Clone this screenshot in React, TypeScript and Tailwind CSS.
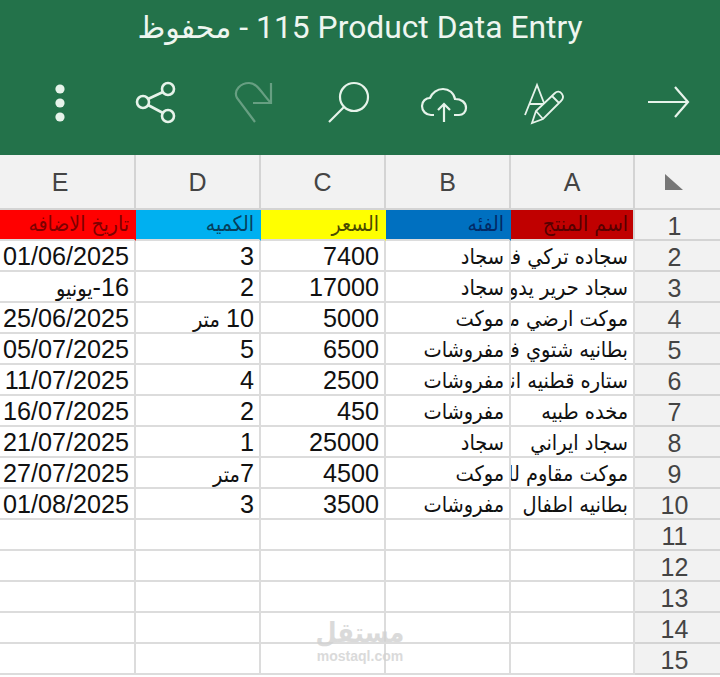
const columns = ['E', 'D', 'C', 'B', 'A'];
const widths = ['w-[136px]', 'w-[125px]', 'w-[125px]', 'w-[125px]', 'w-[124px]'];

const headers = [
  { text: 'تاريخ الاضافه', cls: 'bg-[#ff0000] text-[#7d0000]' },
  { text: 'الكميه', cls: 'bg-[#00b0f0] text-[#06405c]' },
  { text: 'السعر', cls: 'bg-[#ffff00] text-[#4a4a00]' },
  { text: 'الفئه', cls: 'bg-[#0070c0] text-[#022a66]' },
  { text: 'اسم المنتج', cls: 'bg-[#c00000] text-[#560000]' },
];

const rows = [
  ['01/06/2025', '3', '7400', 'سجاد', 'سجاده تركي فاخر'],
  ['16-يونيو', '2', '17000', 'سجاد', 'سجاد حرير يدوي'],
  ['25/06/2025', '10 متر', '5000', 'موكت', 'موكت ارضي مقاوم'],
  ['05/07/2025', '5', '6500', 'مفروشات', 'بطانيه شتوي فاخره'],
  ['11/07/2025', '4', '2500', 'مفروشات', 'ستاره قطنيه انيقه'],
  ['16/07/2025', '2', '450', 'مفروشات', 'مخده طبيه'],
  ['21/07/2025', '1', '25000', 'سجاد', 'سجاد ايراني'],
  ['27/07/2025', '7متر', '4500', 'موكت', 'موكت مقاوم للماء'],
  ['01/08/2025', '3', '3500', 'مفروشات', 'بطانيه اطفال'],
  ['', '', '', '', ''],
  ['', '', '', '', ''],
  ['', '', '', '', ''],
  ['', '', '', '', ''],
  ['', '', '', '', ''],
];

// digits keep the Arial-width face, Arabic runs get the narrower one
function CellText({ value }: { value: string }) {
  const parts = value.split(/(\d[\d/-]*)/).filter(Boolean);
  return (
    <>
      {parts.map((part, i) =>
        /^\d/.test(part) ? (
          <span key={i} className="text-[25.2px]">{part}</span>
        ) : (
          <span key={i} className="text-[21.5px] font-['DejaVu_Sans_Condensed','DejaVu_Sans',sans-serif]">{part}</span>
        ),
      )}
    </>
  );
}

function ToolIcon({ children, dim }: { children: React.ReactNode; dim?: boolean }) {
  return (
    <svg
      width="60"
      height="70"
      viewBox="0 0 60 70"
      fill="none"
      stroke="#e6f3ea"
      strokeWidth="2.2"
      className={dim ? 'opacity-35' : ''}
    >
      {children}
    </svg>
  );
}

function Toolbar() {
  return (
    <div className="flex h-[70px] pl-[30px] pr-[22px] gap-[36.6px]">
      <ToolIcon>
        <circle cx="30" cy="19" r="4.6" fill="#e6f3ea" stroke="none" />
        <circle cx="30" cy="33" r="4.6" fill="#e6f3ea" stroke="none" />
        <circle cx="30" cy="47" r="4.6" fill="#e6f3ea" stroke="none" />
      </ToolIcon>
      <ToolIcon>
        <circle cx="41" cy="19" r="6" strokeWidth="2.6" />
        <circle cx="16" cy="32" r="6" strokeWidth="2.6" />
        <circle cx="41" cy="46" r="6" strokeWidth="2.6" />
        <path d="M21 29 L36 22 M21 35 L36 43" strokeWidth="2.6" />
      </ToolIcon>
      <ToolIcon dim>
        <path d="M32 52 L14 28 C10 20 18 13 26 13 C34 13 38 22 47 32" />
        <path d="M48 13 V33 H30" />
      </ToolIcon>
      <ToolIcon>
        <circle cx="34" cy="27" r="14" />
        <path d="M24 37 L9 52" />
      </ToolIcon>
      <ToolIcon>
        <path d="M18 45 H15 C10 45 6 41 6 36 C6 31 10 28 14 28 C16 23 21 19 27 19 C33 19 38 23 39 29 C45 29 50 32 50 38 C50 42 47 45 43 45 H38" />
        <path d="M28 52 V34 M22 40 L28 34 L34 40" />
      </ToolIcon>
      <ToolIcon>
        <path d="M12 45 L24 15 L31 33 M17 34 H30" strokeWidth="1.8" />
        <path d="M19 53 L23 41 L42 23 C44 21 47 21 49 24 C51 27 50 29 48 31 L30 49 Z M23 41 L30 49 M39 26 L46 33" strokeWidth="1.8" />
      </ToolIcon>
      <div className="ml-auto">
        <ToolIcon>
          <path d="M10 32 H50 M37 17 L50 32 L37 47" />
        </ToolIcon>
      </div>
    </div>
  );
}

export default function App() {
  return (
    <div className="relative w-[720px] h-[677px] overflow-hidden bg-white font-['Liberation_Sans','DejaVu_Sans',sans-serif]">
      {/* Green title bar */}
      <div className="h-[155px] bg-[#23724a] flex flex-col">
        <div className="h-[70px] pb-[14px] flex items-center justify-center gap-[8px] text-[#eef6f0] font-['Roboto','DejaVu_Sans',sans-serif] whitespace-nowrap">
          <span className="text-[30px] leading-[40px] font-['DejaVu_Sans','Roboto',sans-serif]">محفوظ</span>
          <span className="text-[31.8px]">-</span>
          <span className="text-[31.8px]">115 Product Data Entry</span>
        </div>
        <Toolbar />
      </div>

      {/* Column letters */}
      <div className="flex h-[55px] bg-[#f2f2f2] text-[25px] text-[#444444]">
        {columns.map((c, i) => (
          <div
            key={c}
            className={`${widths[i]} ${i === 0 ? 'pr-[14px]' : ''} pt-[3px] flex items-center justify-center border-r-2 border-b-2 border-[#d4d4d4]`}
          >
            {c}
          </div>
        ))}
        <div className="flex-1 flex items-center justify-center border-b-2 border-[#d4d4d4]">
          <svg width="20" height="16" viewBox="0 0 20 16" className="mr-[7px]">
            <path d="M1 0 L19 16 H1 Z" fill="#777777" />
          </svg>
        </div>
      </div>

      {/* Row 1, coloured headings */}
      <div className="flex h-[31px]">
        {headers.map((h, i) => (
          <div
            key={h.text}
            dir="rtl"
            className={`${widths[i]} ${h.cls} ${i === 4 ? 'border-r-[#d4d4d4]' : 'border-r-transparent'} flex items-center pr-[5px] pt-[1px] text-[21px] font-['DejaVu_Sans_Condensed','DejaVu_Sans',sans-serif] border-r-2 border-b-2 border-b-[#dcdcdc] overflow-hidden whitespace-nowrap`}
          >
            {h.text}
          </div>
        ))}
        <div className="flex-1 flex items-center justify-center pt-[4px] pr-[6px] bg-[#f2f2f2] text-[25px] text-[#444444] border-b-2 border-[#d4d4d4]">
          1
        </div>
      </div>

      {/* Data rows */}
      {rows.map((row, r) => (
        <div key={r} className="flex h-[31px]">
          {row.map((cell, i) => (
            <div
              key={i}
              dir="rtl"
              className={`${widths[i]} block pr-[5px] pt-[2px] leading-[27px] text-[#111111] border-r-2 border-b-2 border-[#dcdcdc] overflow-hidden whitespace-nowrap`}
            >
              <CellText value={cell} />
            </div>
          ))}
          <div className="flex-1 flex items-center justify-center pt-[4px] pr-[6px] bg-[#f2f2f2] text-[25px] text-[#444444] border-b-2 border-[#d4d4d4]">
            {r + 2}
          </div>
        </div>
      ))}

      {/* Watermark */}
      <div className="absolute left-[315px] top-[617px] w-[90px] flex flex-col items-center text-[#d2d2d2] opacity-80 pointer-events-none font-['DejaVu_Sans_Condensed','DejaVu_Sans',sans-serif]">
        <span className="text-[27px] leading-[32px] font-bold">مستقل</span>
        <span className="text-[14px] leading-[14px] font-bold font-['Liberation_Sans',sans-serif]">mostaql.com</span>
      </div>
    </div>
  );
}
